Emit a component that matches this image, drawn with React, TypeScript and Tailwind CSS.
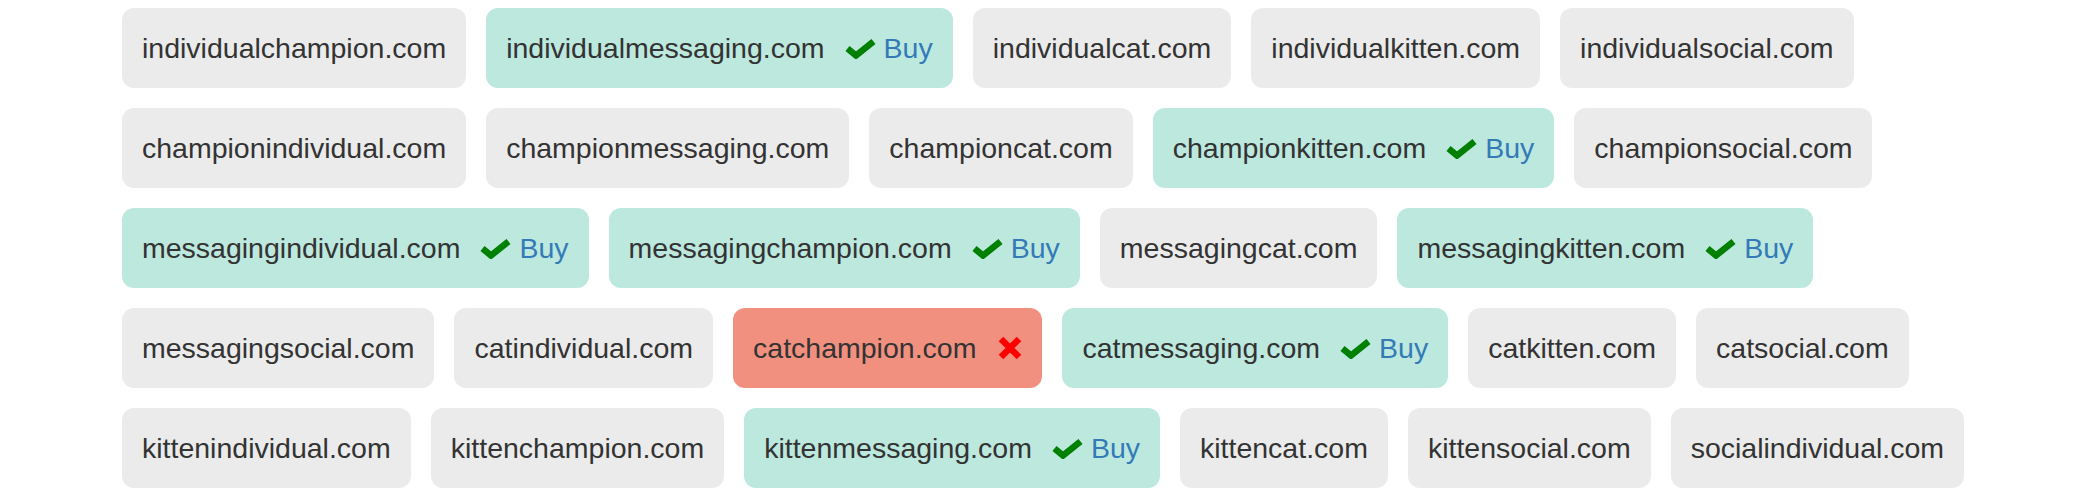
import React from "react";

type Status = "unknown" | "available" | "taken";

const domains: [string, Status][] = [
	["individualchampion.com", "unknown"],
	["individualmessaging.com", "available"],
	["individualcat.com", "unknown"],
	["individualkitten.com", "unknown"],
	["individualsocial.com", "unknown"],
	["championindividual.com", "unknown"],
	["championmessaging.com", "unknown"],
	["championcat.com", "unknown"],
	["championkitten.com", "available"],
	["championsocial.com", "unknown"],
	["messagingindividual.com", "available"],
	["messagingchampion.com", "available"],
	["messagingcat.com", "unknown"],
	["messagingkitten.com", "available"],
	["messagingsocial.com", "unknown"],
	["catindividual.com", "unknown"],
	["catchampion.com", "taken"],
	["catmessaging.com", "available"],
	["catkitten.com", "unknown"],
	["catsocial.com", "unknown"],
	["kittenindividual.com", "unknown"],
	["kittenchampion.com", "unknown"],
	["kittenmessaging.com", "available"],
	["kittencat.com", "unknown"],
	["kittensocial.com", "unknown"],
	["socialindividual.com", "unknown"],
];

const CheckIcon = () => (
	<svg width="31" height="20" viewBox="0 0 31 20" className="shrink-0 mt-[2px]">
		<path d="M2.5 9.5 L11 16.5 L28.5 2.5" fill="none" stroke="#008000" strokeWidth="6.5" />
	</svg>
);

const CrossIcon = () => (
	<svg width="24" height="24" viewBox="0 0 24 24" className="shrink-0">
		<path d="M3 3 L21 21 M21 3 L3 21" fill="none" stroke="#ff0000" strokeWidth="6.5" />
	</svg>
);

const DomainPill = ({ name, status }: { name: string; status: Status }) => {
	const bg =
		status === "available"
			? "bg-[#bce8de]"
			: status === "taken"
				? "bg-[#f29080]"
				: "bg-[#ebebeb]";
	return (
		<div className={`${bg} h-20 rounded-xl px-5 flex items-center text-[#333]`}>
			<span>{name}</span>
			{status === "available" && (
				<span className="flex items-center ml-5 gap-2">
					<CheckIcon />
					<span className="text-[#337ab7]">Buy</span>
				</span>
			)}
			{status === "taken" && (
				<span className="flex items-center ml-[22px]">
					<CrossIcon />
				</span>
			)}
		</div>
	);
};

export default function App() {
	return (
		<div className="bg-white w-[2090px] h-[504px] overflow-hidden pl-[122px] pt-2 font-['Liberation_Sans',Arial,sans-serif] text-[28.5px] leading-none">
			<div className="w-[1928px] flex flex-wrap gap-5">
				{domains.map(([name, status]) => (
					<DomainPill key={name} name={name} status={status} />
				))}
			</div>
		</div>
	);
}
